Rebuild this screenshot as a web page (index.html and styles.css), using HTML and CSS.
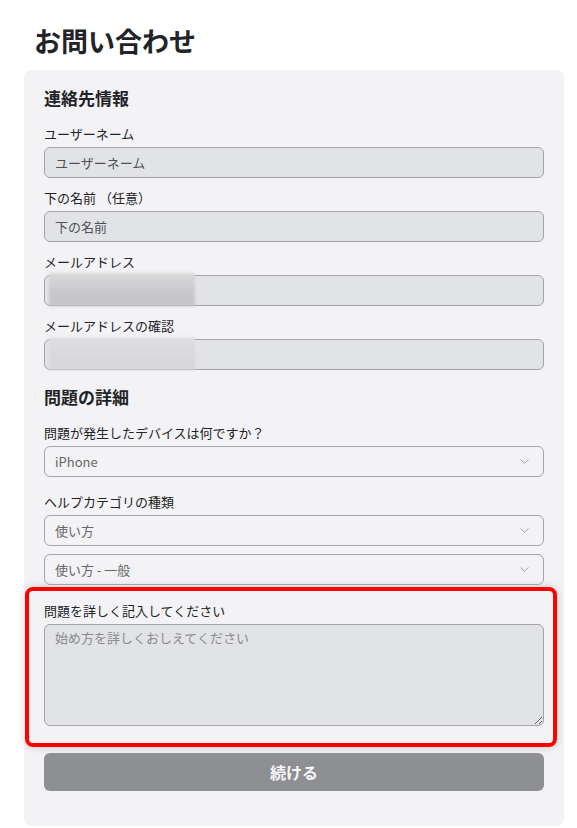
FILE: index.html
```html
<!DOCTYPE html>
<html lang="ja">
  <head>
    <meta charset="UTF-8" />
    <meta name="viewport" content="width=device-width, initial-scale=1.0" />
    <title>お問い合わせ</title>
    <link rel="stylesheet" href="styles.css">
  </head>
  <body>
    <div class="page">
      <h1 class="title">お問い合わせ</h1>
      <form class="card">
        <h2 class="section-title">連絡先情報</h2>

        <div class="field">
          <label class="label">ユーザーネーム</label>
          <input class="input" type="text" placeholder="ユーザーネーム" />
        </div>
        <div class="field">
          <label class="label">下の名前 （任意）</label>
          <input class="input" type="text" placeholder="下の名前" />
        </div>
        <div class="field">
          <label class="label">メールアドレス</label>
          <div class="masked">
            <input class="input" type="email" />
            <span class="blur dark"></span>
          </div>
        </div>
        <div class="field">
          <label class="label">メールアドレスの確認</label>
          <div class="masked">
            <input class="input" type="email" />
            <span class="blur light"></span>
          </div>
        </div>

        <h2 class="section-title second">問題の詳細</h2>

        <div class="field device">
          <label class="label">問題が発生したデバイスは何ですか？</label>
          <div class="select-wrap">
            <select class="select">
              <option>iPhone</option>
              <option>Android</option>
            </select>
            <svg class="chevron" width="9" height="5" viewBox="0 0 9 5"><path d="M0.5 0.5 L4.5 4.3 L8.5 0.5" fill="none" stroke="#a5a5a8" stroke-width="1"/></svg>
          </div>
        </div>
        <div class="field category">
          <label class="label">ヘルプカテゴリの種類</label>
          <div class="select-wrap">
            <select class="select">
              <option>使い方</option>
            </select>
            <svg class="chevron" width="9" height="5" viewBox="0 0 9 5"><path d="M0.5 0.5 L4.5 4.3 L8.5 0.5" fill="none" stroke="#a5a5a8" stroke-width="1"/></svg>
          </div>
          <div class="select-wrap sub">
            <select class="select">
              <option>使い方 - 一般</option>
            </select>
            <svg class="chevron" width="9" height="5" viewBox="0 0 9 5"><path d="M0.5 0.5 L4.5 4.3 L8.5 0.5" fill="none" stroke="#a5a5a8" stroke-width="1"/></svg>
          </div>
        </div>

        <div class="highlight">
          <label class="label">問題を詳しく記入してください</label>
          <textarea class="textarea" placeholder="始め方を詳しくおしえてください"></textarea>
        </div>

        <button type="button" class="btn">続ける</button>
      </form>
    </div>
  </body>
</html>
```

FILE: styles.css
```css
* {
  box-sizing: border-box;
}
body {
  margin: 0;
  background: #fff;
  color: #222327;
  font-family: "Noto Sans CJK JP", "Noto Sans", sans-serif;
}
.page {
  width: 540px;
  margin-left: 24px;
}
.title {
  margin: 23px 0 11px 10px;
  font-size: 27px;
  line-height: 36px;
  font-weight: 700;
}
.card {
  background: #f3f3f5;
  border-radius: 8px;
  padding: 16px 20px 35px;
}
.section-title {
  margin: 0 0 15px;
  font-size: 17px;
  line-height: 24px;
  font-weight: 700;
}
.section-title.second {
  margin-top: 15px;
}
.field {
  margin-bottom: 11px;
}
.field.device {
  margin-bottom: 16px;
}
.field.category {
  margin-bottom: 0;
}
.label {
  display: block;
  font-size: 13px;
  line-height: 18px;
  margin-bottom: 4px;
}
.input,
.select,
.textarea {
  display: block;
  width: 100%;
  font-family: inherit;
  font-size: 13px;
  color: #555;
  border: 1px solid #a4a4a7;
  border-radius: 6px;
  outline: none;
}
.input {
  height: 31px;
  padding: 0 10px;
  background: #e2e3e7;
}
.input::placeholder {
  color: #505055;
}
.masked {
  position: relative;
}
.blur {
  position: absolute;
  left: 5px;
  top: -2px;
  width: 146px;
  height: 33px;
  filter: blur(1.5px);
}
.blur.dark {
  background: linear-gradient(180deg, #dadadc 0%, #c9c9cb 55%, #c4c4c6 100%);
}
.blur.light {
  background: linear-gradient(180deg, #dfdfe2 0%, #d8d8db 60%, #d6d6d9 100%);
}
.select-wrap {
  position: relative;
}
.select-wrap.sub {
  margin-top: 8px;
}
.select {
  height: 31px;
  padding: 0 10px;
  background: transparent;
  appearance: none;
  -webkit-appearance: none;
  color: #666;
}
.chevron {
  position: absolute;
  right: 15px;
  top: 13px;
  pointer-events: none;
}
.highlight {
  margin: 2px -13px 6px -19px;
  padding: 11px 9px 17px 15px;
  border: 4px solid #ff0000;
  border-radius: 8px;
  box-shadow: 0 0 8px rgba(0, 0, 0, 0.18);
}
.textarea {
  height: 102px;
  padding: 4px 10px;
  line-height: 18px;
  background: #e2e3e7;
  resize: both;
}
.textarea::placeholder {
  color: #8a8a8e;
}
.btn {
  display: block;
  width: 100%;
  height: 38px;
  border: none;
  border-radius: 6px;
  background: #8e8f93;
  color: #f7f7f8;
  font-family: inherit;
  font-size: 16px;
  font-weight: 700;
  cursor: pointer;
}
```
